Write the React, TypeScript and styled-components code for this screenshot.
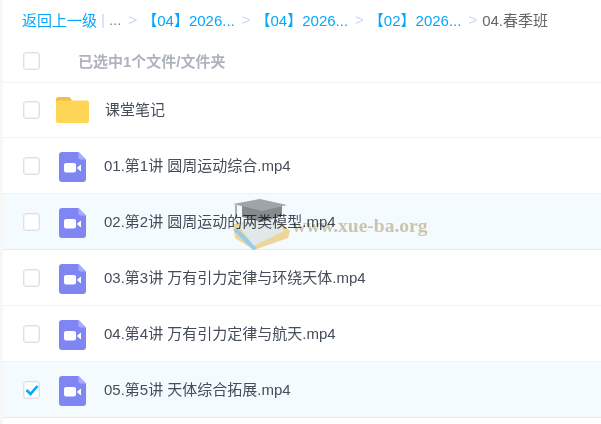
import React from 'react';
import styled, { createGlobalStyle } from 'styled-components';

const GlobalStyle = createGlobalStyle`
    html, body {
        margin: 0;
        padding: 0;
        background: #fff;
    }
    body {
        font-family: "Liberation Sans", Arial, "Noto Sans CJK SC", sans-serif;
    }
`;

const Page = styled.div`
    position: relative;
    width: 601px;
    height: 424px;
    overflow: hidden;
    background: #fff;
    padding-left: 3px;
    box-sizing: border-box;
`;

const Strip = styled.div`
    position: absolute;
    left: 0;
    top: 0;
    bottom: 0;
    width: 3px;
    background: #f7f7f7;
`;

const Crumbs = styled.div`
    display: flex;
    align-items: center;
    box-sizing: border-box;
    height: 40px;
    padding: 0 0 2px 19px;
    font-size: 15px;
    white-space: nowrap;
`;

const CrumbLink = styled.span`
    color: #06a7ff;
`;

const CrumbBar = styled.span`
    color: #c4d8f4;
    margin: 0 4px 0 4px;
`;

const CrumbDots = styled.span`
    color: #818999;
`;

const CrumbArrow = styled.span`
    color: #c4d8f4;
    margin: 0 5px 0 7px;
`;

const CrumbCurrent = styled.span`
    color: #666;
`;

const HeaderRow = styled.div`
    display: flex;
    align-items: center;
    height: 42px;
    border-bottom: 1px solid #f1f2f8;
`;

const Row = styled.div<{ $tinted?: boolean; $height?: number }>`
    display: flex;
    align-items: center;
    height: ${p => p.$height ?? 55}px;
    border-bottom: 1px solid ${p => (p.$tinted ? '#dfedf9' : '#f1f2f8')};
    background: ${p => (p.$tinted ? '#f4fbff' : '#fff')};
`;

const Box = styled.span`
    display: flex;
    align-items: center;
    justify-content: center;
    width: 15px;
    height: 16px;
    margin-left: 20px;
    border: 1px solid #dde0e9;
    border-radius: 3px;
    box-shadow: inset 0 0 0 1px #f1f3f7;
    background: #fff;
    flex: none;
`;

const HeaderLabel = styled.span`
    margin: 0 0 2px 38px;
    font-size: 15px;
    font-weight: 700;
    color: #afb3bf;
`;

const IconSlot = styled.span<{ $video?: boolean }>`
    display: flex;
    justify-content: ${p => (p.$video ? 'flex-start' : 'center')};
    width: 33px;
    margin: ${p => (p.$video ? '2px 0 0 19px' : '0 0 0 16px')};
    flex: none;
`;

const Name = styled.span<{ $folder?: boolean }>`
    margin: 0 0 ${p => (p.$folder ? 4 : 2)}px ${p => (p.$folder ? 16 : 12)}px;
    font-size: 15px;
    color: #454d5a;
    white-space: nowrap;
`;

const Watermark = styled.div`
    position: absolute;
    left: 232px;
    top: 198px;
    display: flex;
    align-items: flex-start;
    pointer-events: none;
    mix-blend-mode: multiply;
`;

const WatermarkText = styled.span`
    margin-left: 2px;
    margin-top: 17px;
    font-family: "Liberation Serif", "Times New Roman", serif;
    font-size: 19.5px;
    font-weight: 700;
    color: #d5c8ab;
    white-space: nowrap;
`;

const FolderIcon = () => (
    <svg width="33" height="26" viewBox="0 0 33 26">
        <path d="M0 2.500A2.500 2.500 0 0 1 2.500 0H12c1.500 0 2.500.8 3.300 2.200L16 4H2L0 6z" fill="#f1bd47" />
        <rect x="0" y="3.500" width="33" height="22.500" rx="2" fill="#ffd558" />
    </svg>
);

const VideoIcon = () => (
    <svg width="27" height="30" viewBox="0 0 27 30">
        <path d="M3 0h16.500L27 7.500V27a3 3 0 0 1-3 3H3a3 3 0 0 1-3-3V3a3 3 0 0 1 3-3z" fill="#8085f4" />
        <path d="M19.500 0L27 7.500h-5.500a2 2 0 0 1-2-2z" fill="#a9adf9" />
        <rect x="5" y="11" width="12" height="9.500" rx="2" fill="#fff" />
        <path d="M18 15.700l4-3.200v7l-4-3.200z" fill="#fff" />
    </svg>
);

const Check = () => (
    <svg width="14" height="12" viewBox="0 0 14 12">
        <path d="M1.500 6L5.500 10l7-8" fill="none" stroke="#06a7ff" strokeWidth="2.600" />
    </svg>
);

const WatermarkLogo = () => (
    <svg width="58" height="53" viewBox="0 0 58 53" style={{ flex: 'none' }}>
        <path d="M1 26L20 22 45 22 58 33 56 40 22 52 3 40z" fill="#f9d998" />
        <path d="M1 32L21 52 25 50 5 30z" fill="#9fcfeb" />
        <path d="M6 27L20 20 44 20 52 33 22 48z" fill="#ecece8" />
        <path d="M10 8H50V18L30 24 10 19z" fill="#8c8c8c" />
        <path d="M1 6L28 1 55 7 30 13z" fill="#a6a7a9" />
        <path d="M4 7V20" stroke="#8a8a8a" strokeWidth="1.300" />
    </svg>
);

const files = [
    '01.第1讲 圆周运动综合.mp4',
    '02.第2讲 圆周运动的两类模型.mp4',
    '03.第3讲 万有引力定律与环绕天体.mp4',
    '04.第4讲 万有引力定律与航天.mp4',
    '05.第5讲 天体综合拓展.mp4',
];

export default function App() {
    return (
        <Page>
            <GlobalStyle />
            <Strip />
            <Crumbs>
                <CrumbLink>返回上一级</CrumbLink>
                <CrumbBar>|</CrumbBar>
                <CrumbDots>...</CrumbDots>
                <CrumbArrow>&gt;</CrumbArrow>
                <CrumbLink>【04】2026...</CrumbLink>
                <CrumbArrow>&gt;</CrumbArrow>
                <CrumbLink>【04】2026...</CrumbLink>
                <CrumbArrow>&gt;</CrumbArrow>
                <CrumbLink>【02】2026...</CrumbLink>
                <CrumbArrow>&gt;</CrumbArrow>
                <CrumbCurrent>04.春季班</CrumbCurrent>
            </Crumbs>
            <HeaderRow>
                <Box />
                <HeaderLabel>已选中1个文件/文件夹</HeaderLabel>
            </HeaderRow>
            <Row $height={54}>
                <Box />
                <IconSlot>
                    <FolderIcon />
                </IconSlot>
                <Name $folder>课堂笔记</Name>
            </Row>
            {files.map((name, i) => (
                <Row key={name} $tinted={i === 1 || i === 4}>
                    <Box>{i === 4 && <Check />}</Box>
                    <IconSlot $video>
                        <VideoIcon />
                    </IconSlot>
                    <Name>{name}</Name>
                </Row>
            ))}
            <Watermark>
                <WatermarkLogo />
                <WatermarkText>www.xue-ba.org</WatermarkText>
            </Watermark>
        </Page>
    );
}
